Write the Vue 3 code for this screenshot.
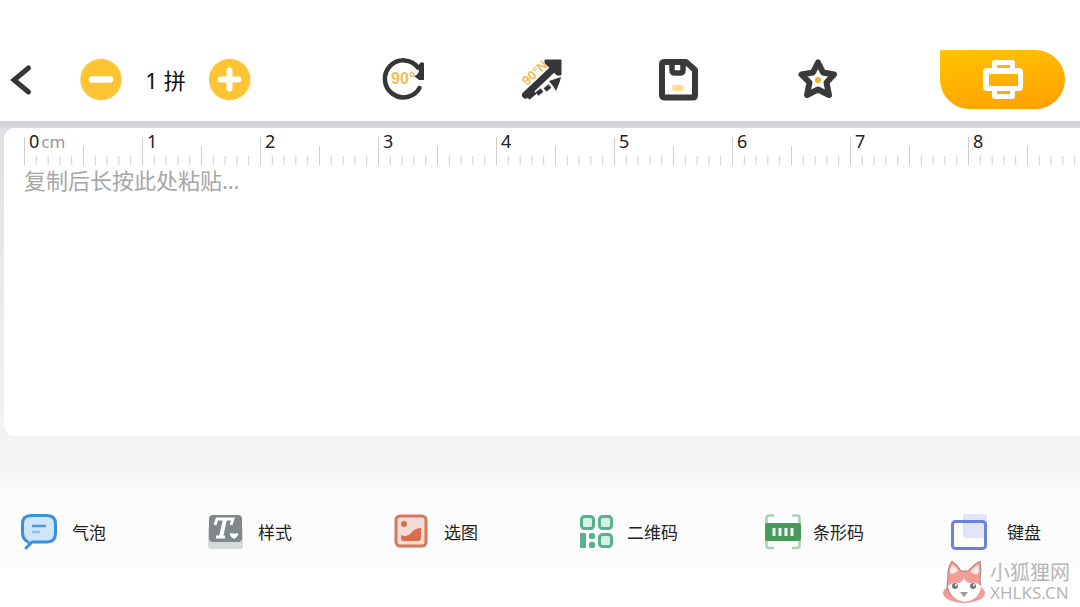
<script setup>
import { ref } from 'vue'

const copies = ref(1)
const content = ref('')
const marks = [0, 1, 2, 3, 4, 5, 6, 7, 8]
const ticks = Array.from({ length: 10 }, (_, i) => ({
  x: i * 11.8 + 0.5,
  top: i === 0 ? 0 : i === 5 ? 9 : 19,
}))
</script>

<template>
  <div class="page">
    <header class="topbar">
      <button class="back" aria-label="返回">
        <svg width="24" height="34" viewBox="0 0 24 34"><path d="M20.500 5 L6 17 L20.500 29" fill="none" stroke="#353638" stroke-width="5" stroke-linecap="round" stroke-linejoin="miter" /></svg>
      </button>
      <div class="stepper">
        <button aria-label="减少" @click="copies = Math.max(1, copies - 1)">
          <svg width="42" height="42" viewBox="0 0 42 42"><circle cx="21" cy="20.500" r="20.700" fill="#ffc433" /><path d="M12 20.500H30" stroke="#fff" stroke-width="6.500" stroke-linecap="round" /></svg>
        </button>
        <span class="copies">{{ copies }} 拼</span>
        <button aria-label="增加" @click="copies++">
          <svg width="42" height="42" viewBox="0 0 42 42"><circle cx="20.700" cy="20.500" r="20.700" fill="#ffc433" /><path d="M11.500 20.500H29.500M20.500 11.500V29.500" stroke="#fff" stroke-width="6" stroke-linecap="round" /></svg>
        </button>
      </div>
      <nav class="actions">
        <button aria-label="旋转">
          <svg width="42" height="42" viewBox="0 0 42 42">
            <path d="M36.500 29A18.500 18.500 0 1 1 35 8.500" fill="none" stroke="#343638" stroke-width="4.500" stroke-linecap="round" />
            <path d="M36 5.500Q38 2 41 4V21H36L31 17Q36 16 36 10Z" fill="#343638" />
            <text x="8" y="25" class="deg">90°</text>
          </svg>
        </button>
        <button aria-label="文字方向">
          <svg width="42" height="42" viewBox="0 0 42 42">
            <path d="M4.500 36 L31 11" stroke="#343638" stroke-width="7" stroke-linecap="round" />
            <path d="M24 1H40V16L36 16L24 4Z" fill="#343638" stroke="#343638" stroke-width="1" />
            <path d="M7 39L14 33M16 35L21 31M24 31L29 27" stroke="#343638" stroke-width="4.500" />
            <path d="M28 22L40 18L39 22L35 32L32 27Z" fill="#343638" />
            <text x="6" y="27" transform="rotate(-43 6 27)" class="deg small">90°N</text>
          </svg>
        </button>
        <button aria-label="保存">
          <svg width="42" height="42" viewBox="0 0 42 42">
            <path d="M6 3H27L36 11V36Q36 38.500 34 38.500H6Q3 38.500 3 36V5Q3 3 6 3Z" fill="none" stroke="#3a3a3c" stroke-width="6" stroke-linejoin="round" />
            <path d="M13 4V11Q13 14 16 14H21Q24 14 24 11V4" fill="none" stroke="#3a3a3c" stroke-width="5.500" />
            <rect x="13" y="26" width="12" height="6" rx="3" fill="#ffdc91" />
          </svg>
        </button>
        <button aria-label="收藏">
          <svg width="42" height="42" viewBox="0 0 42 42">
            <path d="M21 3.500L26 13.500L37 15.500L29.500 23.500L32 36L21 30.500L10 36L12.500 23.500L4.500 15.500L16 13.500Z" fill="#fff" stroke="#3a3a3c" stroke-width="6" stroke-linejoin="round" />
            <circle cx="21" cy="21" r="3" fill="#e8b51f" />
          </svg>
        </button>
      </nav>
      <button class="print" aria-label="打印">
        <svg width="42" height="40" viewBox="0 0 42 40">
          <path fill="#fff" fill-rule="evenodd" d="M10 8V3Q10 0 13 0H30Q33 0 33 3V8H37Q41 8 41 12V27Q41 31 37 31H33V36Q33 39 30 39H13Q10 39 10 36V31H5Q1 31 1 27V12Q1 8 5 8ZM15 5V8H28V5ZM7 14V26H36V14ZM15 31V34H28V31Z" />
        </svg>
      </button>
    </header>

    <main class="workspace">
      <section class="sheet">
        <div class="ruler">
          <div v-for="n in marks" :key="n" class="cm">
            <svg class="ticks" width="118" height="28" viewBox="0 0 118 28">
              <path v-for="t in ticks" :key="t.x" :d="`M${t.x} ${t.top}V28`" stroke="#cecece" stroke-width="1" />
            </svg>
            <span class="mark">{{ n }}<small v-if="n === 0">cm</small></span>
          </div>
        </div>
        <textarea v-model="content" aria-label="标签内容" placeholder="复制后长按此处粘贴…"></textarea>
      </section>
    </main>

    <nav class="tools">
      <button class="tool">
        <svg width="36" height="36" viewBox="0 0 36 36">
          <path d="M10 1.500H26Q34.500 1.500 34.500 10V19Q34.500 28 26 28H10Q1.500 28 1.500 19V10Q1.500 1.500 10 1.500Z" fill="#cfe5fb" />
          <path d="M5 34L11 28H26Q34.500 28 34.500 19V10Q34.500 1.500 26 1.500H10Q1.500 1.500 1.500 10V19Q1.500 25 7 28" fill="none" stroke="#398fdd" stroke-width="3" stroke-linecap="round" stroke-linejoin="round" />
          <path d="M11 12H25" stroke="#4c9bdf" stroke-width="2.500" /><path d="M11 18H19" stroke="#92bfe9" stroke-width="2.500" />
        </svg><span>气泡</span>
      </button>
      <button class="tool">
        <svg width="36" height="36" viewBox="0 0 36 36">
          <rect x="1" y="12" width="35" height="23" rx="3" fill="#d4d9d9" />
          <rect x="2" y="1" width="33" height="27" rx="4" fill="#7f888a" />
          <path d="M8 11L10 5H26L24 11M9 23H18" fill="none" stroke="#fff" stroke-width="2.800" />
          <path d="M18 5L14 23" stroke="#fff" stroke-width="4" />
          <path d="M23 19Q27 20 31 19Q32 22 27 25Q22 22 23 19Z" fill="#fff" />
        </svg><span>样式</span>
      </button>
      <button class="tool">
        <svg width="36" height="36" viewBox="0 0 36 36">
          <rect x="3" y="2" width="30" height="30" rx="4" fill="#f2dcd6" stroke="#d97558" stroke-width="3" />
          <circle cx="11" cy="10" r="3" fill="#d86d50" />
          <path d="M8 21Q14 24 18 19Q22 14 28 14V24Q28 27 25 27H11Q8 27 8 24Z" fill="#d86d50" />
        </svg><span>选图</span>
      </button>
      <button class="tool long">
        <svg width="36" height="36" viewBox="0 0 36 36">
          <g fill="#d4f1e2" stroke="#55b289" stroke-width="3"><rect x="2.500" y="2.500" width="12" height="12" rx="3" /><rect x="20.500" y="2.500" width="12" height="12" rx="3" /><rect x="20.500" y="20.500" width="12" height="12" rx="3" /></g>
          <g fill="#55b289"><rect x="1" y="19" width="6" height="15" rx="1" /><rect x="10" y="19" width="6" height="6" rx="2" /><rect x="10" y="28" width="6" height="6" rx="2" /></g>
        </svg><span>二维码</span>
      </button>
      <button class="tool long">
        <svg width="36" height="36" viewBox="0 0 36 36">
          <path d="M1.500 10V4Q1.500 1.500 4 1.500H9M27 1.500H32Q34.500 1.500 34.500 4V10M1.500 26V32Q1.500 34 4 34H9M27 34H32Q34.500 34 34.500 32V26" fill="none" stroke="#abd0b5" stroke-width="2.500" />
          <rect x="0" y="9" width="36" height="18" rx="2" fill="#48995c" />
          <path d="M9 14V22M15 14V22M21 14V22M27 14V22" stroke="#f3faf4" stroke-width="3" />
        </svg><span>条形码</span>
      </button>
      <button class="tool last">
        <svg width="36" height="36" viewBox="0 0 36 36">
          <rect x="12" y="0" width="24" height="24" rx="2" fill="#e1e4f6" />
          <rect x="1.500" y="7.500" width="33" height="27" rx="3" fill="none" stroke="#6d83d7" stroke-width="3" />
        </svg><span>键盘</span>
      </button>
    </nav>

    <aside class="brand">
      <svg width="44" height="44" viewBox="0 0 44 44">
        <ellipse cx="22" cy="33" rx="21" ry="10" fill="#f39d99" />
        <path d="M6 18Q5 8 10 1Q16 5 19 11H26Q32 4 38 1Q40 10 38 19Q42 37 22 42Q1 36 6 18Z" fill="#f39d99" stroke="#a98280" stroke-width="1" />
        <path d="M8 13Q8 7 11 5Q15 8 16 11Q11 15 8 13ZM29 11Q32 7 36 5Q38 10 36 14Q31 15 29 11Z" fill="#fde9e8" />
        <path d="M6 26Q11 21 16 23Q20 23 22 18Q24 23 29 23Q34 21 39 26Q38 40 22 42Q8 39 6 26Z" fill="#fff" />
        <circle cx="13" cy="26" r="3" fill="#777" /><circle cx="31" cy="26" r="3" fill="#777" />
        <circle cx="14" cy="25" r="1" fill="#fff" /><circle cx="32" cy="25" r="1" fill="#fff" />
        <path d="M18 32H26L22 37Z" fill="#999" />
      </svg>
      <div class="brand-text"><span>小狐狸网</span><span class="domain">XHLKS.CN</span></div>
    </aside>
  </div>
</template>

<style>
body { background: #fff; }
</style>

<style scoped>
.page {
  position: relative;
  min-height: 100vh;
  display: flex;
  flex-direction: column;
  overflow: hidden;
  font-family: "Noto Sans", "Noto Sans CJK SC", sans-serif;
  color: #222;
}
.page, .page * { box-sizing: border-box; }
button {
  padding: 0;
  border: 0;
  background: none;
  font: inherit;
  color: inherit;
  cursor: pointer;
}
svg { display: block; flex: none; overflow: visible; }
.topbar {
  display: flex;
  align-items: center;
  padding: 38px 15px 0 8px;
  height: 121px;
  flex: none;
}
.stepper {
  display: flex;
  align-items: center;
  margin-left: 48px;
}
.copies {
  width: 87px;
  text-align: center;
  font-size: 22px;
  line-height: 32px;
  color: #111;
}
.actions {
  flex: 1;
  display: flex;
  justify-content: space-between;
  margin: 0 101px 0 132px;
}
.deg {
  font: bold 16px "Liberation Sans", sans-serif;
  fill: #efbd59;
}
.small { font-size: 13px; }
.print {
  width: 125px;
  height: 59px;
  display: flex;
  align-items: center;
  justify-content: center;
  border-radius: 2px 30px 30px 30px;
  background: linear-gradient(170deg, #ffc400, #ff9f00);
}
.workspace {
  flex: 1;
  display: flex;
  padding: 7px 0 59px 4px;
  background:
    linear-gradient(#cdcfd0, #d9dbde) top / 100% 7px no-repeat,
    linear-gradient(#dddfe4 0, #f2f2f3 300px, #f4f4f4 350px, #fcfcfc 374px);
}
.sheet {
  flex: 1;
  min-width: 0;
  display: flex;
  flex-direction: column;
  overflow: hidden;
  border-radius: 11px 0 0 11px;
  background: #fff;
  padding-left: 20px;
}
.ruler {
  display: flex;
  height: 38px;
  padding-top: 9px;
  overflow: hidden;
}
.cm {
  flex: none;
  width: 118px;
  display: grid;
}
.ticks, .mark { grid-area: 1 / 1; }
.mark {
  padding-left: 5px;
  margin-top: -8px;
  height: 24px;
  font-size: 18px;
  line-height: 24px;
}
.mark small {
  margin-left: 2px;
  font-size: 17px;
  color: #999;
}
textarea {
  flex: 1;
  padding: 0;
  border: 0;
  outline: 0;
  resize: none;
  background: none;
  font: 22px/28px "Noto Sans", "Noto Sans CJK SC", sans-serif;
}
textarea::placeholder { color: #a6a6a6; }
.tools {
  flex: none;
  display: grid;
  grid-template-columns: repeat(5, 1fr) auto;
  align-items: center;
  height: 73px;
  margin-bottom: 39px;
  padding: 0 39px 0 21px;
  background: #fcfcfc;
}
.tool {
  display: flex;
  align-items: center;
  gap: 15px;
  font-family: "Noto Sans CJK SC", sans-serif;
  font-size: 17px;
  line-height: 24px;
}
.long { gap: 12px; }
.last { gap: 20px; }
.brand {
  position: absolute;
  right: 10px;
  bottom: 3px;
  display: flex;
  align-items: center;
  gap: 4px;
}
.brand-text {
  display: flex;
  flex-direction: column;
  font-size: 20px;
  line-height: 22px;
  color: #b5b5b5;
}
.domain {
  font-size: 17px;
  line-height: 18px;
}
</style>
